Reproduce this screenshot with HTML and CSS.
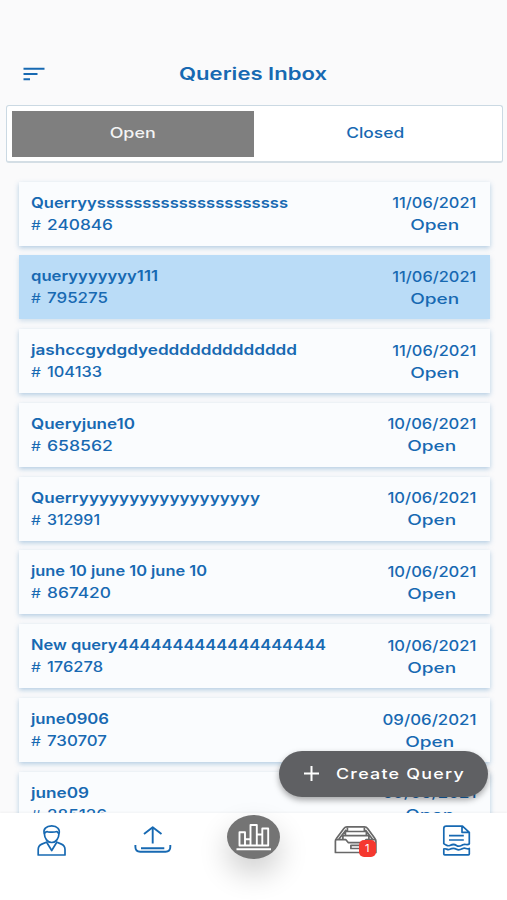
FILE: index.html
```html
<!DOCTYPE html>
<html lang="en">
<head>
<meta charset="UTF-8">
<meta name="viewport" content="width=device-width, initial-scale=1.0">
<title>Queries Inbox</title>
<link rel="stylesheet" href="styles.css">
</head>
<body>
<div class="app">
    <header class="header">
        <svg class="menu" width="22" height="14" viewBox="0 0 22 14"><path d="M0.5 1.7H21.5M0.5 7H14.5M0.5 12.2H7"/></svg>
        <h1><span data-w="148">Queries Inbox</span></h1>
    </header>

    <div class="tabs">
        <div class="tab active"><span data-w="46">Open</span></div>
        <div class="tab"><span data-w="58">Closed</span></div>
    </div>

    <main class="list" id="list"></main>

    <button class="create">
        <svg width="17" height="17" viewBox="0 0 17 17"><path d="M8.5 1V16M1 8.5H16"/></svg>
        <span data-w="129">Create Query</span>
    </button>

    <nav class="nav">
        <a class="item">
            <svg width="29" height="31" viewBox="37 824.5 29 31">
                <path d="M44.3 833C43 829 46 825.4 51.7 825.4S60.2 829 59 833C58.8 838 56 842 51.7 842S44.6 838 44.3 833Z"/>
                <path d="M44.3 833.4C45 831.2 46.5 831 48 831.3C51 831.8 55 831.6 57 831L59 833.5"/>
                <path d="M47.5 841.3L41.8 843.6C39.5 844.6 38.2 846.5 38.2 849V854.5H65V849C65 846.5 63.7 844.6 61.4 843.6L55.9 841.3M46.8 842L51.7 850L56.6 842"/>
            </svg>
        </a>
        <a class="item">
            <svg width="38" height="30" viewBox="134 825.5 38 30">
                <path class="thick" d="M152.7 844V827.8M144 834.5L152.7 827.8L161.5 834.5M141 848.7H164.3M135.4 845.5V847.5Q135.4 852.2 140.2 852.2H165.5Q170.3 852.2 170.3 847.5V845.5"/>
            </svg>
        </a>
        <a class="item chart">
            <svg width="37" height="30" viewBox="235 823 37 30">
                <path class="thick" d="M239.5 846.5V833.2H245V846.5ZM245 840.2H250.5M250.5 846.5V826H256.8V846.5ZM256.8 835.5H262.3M262.3 846.5V829.5H268.2V846.5ZM245 846.5H262.3M236.5 850.3H271"/>
            </svg>
        </a>
        <a class="item inbox">
            <svg width="43" height="28" viewBox="333.6 826.5 43 28">
                <path d="M335 853V841.5Q335 840.2 336 839L343.5 829Q344.7 827.4 346.5 827.4H364Q366 827.4 367.2 829L374.5 839Q375.5 840.2 375.5 841.5V853Z"/>
                <path d="M335.5 840.2H345.5L348 843.2H363L365.5 840.2H375M338.5 839.5L345.8 830.4M372 839.5L365 830.4M345 832H366M347 828V832M364 828V832M342.5 836.2H368.5M345 832V836M366 832V836M342.5 836.2V840M368.5 836.2V840M350.5 845.8H360.5V849H350.5Z"/>
            </svg>
            <b class="badge">1</b>
        </a>
        <a class="item">
            <svg width="29" height="31" viewBox="442 824.5 29 31">
                <path d="M443.8 843.5V828Q443.8 825.7 446.3 825.7H462.5L469.3 831.8V843.5M462 825.8V831.8H469M449 835.2H463.8M449 839.5H463.8"/>
                <path d="M443.5 843.5C446 843.5 447 846.2 449.8 845S454 843.2 456.5 845S460.5 845.5 462.8 844.3S467 845 469.6 843.5M443.8 848.5C446 847.3 447.2 850 449.8 848.8S454 847.3 456.5 848.8S460.5 849.2 462.8 848S467 849.2 469.3 848V853.4Q469.3 854.3 468.4 854.3H444.7Q443.8 854.3 443.8 853.4Z"/>
            </svg>
        </a>
    </nav>
</div>
<script src="script.js"></script>
</body>
</html>
```

FILE: styles.css
```css
* {
    box-sizing: border-box;
}

body {
    margin: 0;
    font-family: Inter, "Open Sans", sans-serif;
    font-feature-settings: "ss03";
    color: #1769b2;
    background-color: #fafafb;
}

.app {
    position: relative;
    display: flex;
    flex-direction: column;
    width: 507px;
    height: 900px;
    overflow: hidden;
}

span {
    display: inline-block;
    white-space: pre;
}

svg {
    display: block;
    fill: none;
    stroke: currentColor;
    stroke-linejoin: round;
}

/* Header */
.header {
    display: grid;
    grid-template-columns: 80px 1fr 80px;
    align-items: center;
    height: 105px;
    padding-top: 43px;
}

.menu {
    margin-left: 23px;
    stroke-width: 2;
}

h1 {
    margin: 0;
    font-size: 17px;
    font-weight: 600;
    line-height: 24px;
    text-align: center;
}

/* Tabs */
.tabs {
    display: flex;
    height: 58px;
    margin: 0 4px 0 6px;
    padding: 5px 6px 4px 5px;
    background-color: #fff;
    border: 1px solid #cbd9e3;
    border-bottom: 2px solid #d4dee5;
    border-radius: 3px;
}

.tab {
    flex: 1;
    padding-top: 10px;
    font-size: 14.5px;
    font-weight: 500;
    line-height: 24px;
    text-align: center;
}

.tab.active {
    color: #f4f4f4;
    background-color: #7f7f7f;
}

/* Query list */
.list {
    display: flex;
    flex: 1;
    flex-direction: column;
    gap: 9.8px;
    min-height: 0;
    padding: 18.5px 17.5px 0 19px;
    overflow: hidden;
}

.card {
    display: flex;
    flex-shrink: 0;
    justify-content: space-between;
    height: 64px;
    padding: 10px 13px 0 11.5px;
    font-size: 14.5px;
    font-weight: 500;
    line-height: 22px;
    background-color: #fafcfe;
    box-shadow: 0 2px 5px rgba(80, 140, 190, 0.42);
}

.card.selected {
    background-color: #badcf7;
    box-shadow: 0 2px 5px rgba(80, 140, 190, 0.25);
}

.card [data-w] {
    transform-origin: left;
}

.name {
    height: 22px;
    font-weight: 600;
}

.number {
    display: flex;
}

.hash {
    width: 10px;
    margin-right: 6px;
    font-size: 13px;
    font-weight: 400;
}

.side {
    padding-top: 0.5px;
    text-align: center;
}

.side [data-w] {
    transform-origin: center;
}

/* Floating button */
.create {
    position: absolute;
    top: 750.5px;
    left: 279px;
    display: flex;
    align-items: center;
    gap: 16px;
    width: 209px;
    height: 46.5px;
    padding: 0 24px;
    font: 500 14.5px Inter, sans-serif;
    font-feature-settings: inherit;
    letter-spacing: 1px;
    color: #fff;
    background-color: #5f6063;
    border: 0;
    border-radius: 24px;
    box-shadow: 0 3px 6px rgba(0, 0, 0, 0.35);
}

.create span {
    transform-origin: left;
}

.create svg {
    stroke-width: 2;
}

/* Bottom navigation */
.nav {
    display: grid;
    grid-template-columns: repeat(5, 1fr);
    align-items: center;
    justify-items: center;
    height: 87.5px;
    padding: 0 0 32px 1px;
    background-color: #fff;
    box-shadow: 0 -1px 2px rgba(0, 0, 0, 0.04);
}

.item {
    position: relative;
    stroke-width: 1.7;
}

.thick {
    stroke-width: 1.9;
}

.chart {
    display: flex;
    align-items: center;
    justify-content: center;
    width: 53px;
    height: 44px;
    margin-bottom: 6px;
    color: #fff;
    background-color: #747474;
    border-radius: 50%;
    box-shadow: 0 14px 30px rgba(0, 0, 0, 0.2);
}

.inbox {
    color: #686868;
}

.badge {
    position: absolute;
    right: 1px;
    bottom: -3px;
    width: 17px;
    height: 17px;
    font-size: 11px;
    font-weight: 400;
    line-height: 17px;
    text-align: center;
    color: #fff;
    background-color: #f5382f;
    border-radius: 5px;
}
```

FILE: script.js
```js
// title, title width, number, number width, date, date width
const queries = [
    ['Querryy' + 's'.repeat(21), 257, '240846', 66, '11/06/2021', 84],
    ['queryyyyyyy111', 127, '795275', 61, '11/06/2021', 84],
    ['jashccgydgdye' + 'd'.repeat(13), 266, '104133', 55, '11/06/2021', 84],
    ['Queryjune10', 104, '658562', 66, '10/06/2021', 89],
    ['Querr' + 'y'.repeat(18), 229, '312991', 53, '10/06/2021', 89],
    ['june 10 june 10 june 10', 176, '867420', 64, '10/06/2021', 89],
    ['New query' + '4'.repeat(19), 295, '176278', 56, '10/06/2021', 89],
    ['june0906', 78, '730707', 60, '09/06/2021', 94],
    ['june09', 58, '285126', 60, '09/06/2021', 94]
];

// Render the cards
document.getElementById('list').innerHTML = queries.map((q, i) => `
    <div class="card${i === 1 ? ' selected' : ''}">
        <div>
            <div class="name"><span data-w="${q[1]}">${q[0]}</span></div>
            <div class="number"><span class="hash" data-w="12">#</span><span data-w="${q[3]}">${q[2]}</span></div>
        </div>
        <div class="side" style="width: ${q[5]}px">
            <div><span data-w="${q[5]}">${q[4]}</span></div>
            <div><span data-w="49">Open</span></div>
        </div>
    </div>`).join('');

document.querySelectorAll('[data-w]').forEach(el => {
    const width = el.getBoundingClientRect().width;
    if (el.parentElement.parentElement.className === 'side') {
        el.style.margin = `0 ${(el.dataset.w - width) / 2}px`;
    }
    el.style.transform = `scaleX(${el.dataset.w / width})`;
});
```
